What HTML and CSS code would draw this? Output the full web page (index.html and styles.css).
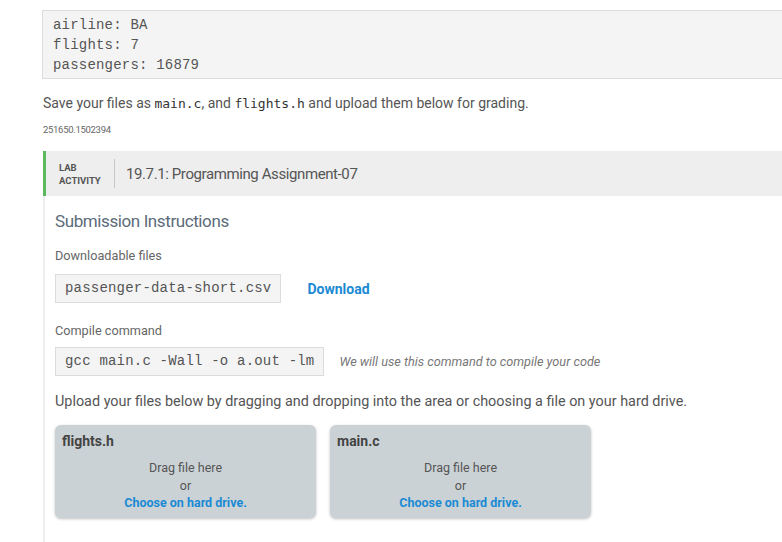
FILE: index.html
```html
<!DOCTYPE html>
<html>
<head>
<meta charset="utf-8">
<link rel="stylesheet" href="styles.css">
</head>
<body>
<div class="page">
  <pre class="code-block">airline: BA
flights: 7
passengers: 16879</pre>
  <p class="save-note">Save your files as <code>main.c</code>, and <code>flights.h</code> and upload them below for grading.</p>
  <div class="item-id">251650.1502394</div>

  <div class="lab">
    <div class="lab-header">
      <div class="lab-label">LAB<br>ACTIVITY</div>
      <div class="lab-sep"></div>
      <div class="lab-title">19.7.1: Programming Assignment-07</div>
    </div>
    <div class="lab-body">
      <h2 class="section-title">Submission Instructions</h2>
      <div class="field-label">Downloadable files</div>
      <div class="row">
        <div class="mono-box">passenger-data-short.csv</div>
        <a class="download">Download</a>
      </div>
      <div class="field-label compile">Compile command</div>
      <div class="row compile-row">
        <div class="mono-box">gcc main.c -Wall -o a.out -lm</div>
        <span class="hint">We will use this command to compile your code</span>
      </div>
      <p class="upload-text">Upload your files below by dragging and dropping into the area or choosing a file on your hard drive.</p>
      <div class="drops">
        <div class="drop">
          <div class="drop-name">flights.h</div>
          <div class="drop-center">
            <div>Drag file here</div>
            <div>or</div>
            <div class="choose">Choose on hard drive.</div>
          </div>
        </div>
        <div class="drop">
          <div class="drop-name">main.c</div>
          <div class="drop-center">
            <div>Drag file here</div>
            <div>or</div>
            <div class="choose">Choose on hard drive.</div>
          </div>
        </div>
      </div>
    </div>
  </div>
</div>
</body>
</html>
```

FILE: styles.css
```css
html, body {
  margin: 0;
  padding: 0;
  background: #fff;
  overflow: hidden;
}
body {
  font-family: Roboto, "Liberation Sans", sans-serif;
  color: #555;
}
.page {
  padding: 10px 0 0 42px;
  width: 760px;
}
.code-block {
  margin: 0;
  background: #f4f4f4;
  border: 1px solid #dcdcdc;
  border-right: none;
  padding: 4px 10px 3px 10px;
  font-family: "Liberation Mono", "Courier New", monospace;
  font-size: 14px;
  letter-spacing: 0.2px;
  line-height: 20px;
  color: #555;
}
.save-note {
  margin: 14px 0 0 1px;
  font-size: 14px;
  line-height: 20px;
  color: #555;
}
.save-note code {
  font-family: "DejaVu Sans Mono", monospace;
  font-size: 13px;
  color: #333;
}
.item-id {
  margin: 10px 0 0 1px;
  font-size: 9.5px;
  line-height: 12px;
  color: #666;
  letter-spacing: -0.3px;
}
.lab {
  margin: 15px 0 0 1px;
}
.lab-header {
  display: flex;
  align-items: center;
  height: 45px;
  background: #eeeeee;
  border-left: 3px solid #5cb85c;
}
.lab-label {
  font-size: 9.5px;
  font-weight: 700;
  line-height: 13px;
  color: #555;
  margin-left: 13px;
  width: 53px;
  padding-top: 1px;
}
.lab-sep {
  width: 1px;
  height: 29px;
  background: #c8c8c8;
  margin: 0 11px 0 2px;
}
.lab-title {
  font-size: 15px;
  letter-spacing: -0.4px;
  color: #555;
  line-height: 20px;
}
.lab-body {
  border-left: 2px solid #eeeeee;
  padding: 13px 0 30px 10px;
}
.section-title {
  margin: 0;
  font-size: 17px;
  letter-spacing: -0.4px;
  font-weight: 400;
  line-height: 24px;
  color: #5b6b79;
}
.field-label {
  margin-top: 14px;
  font-size: 12.7px;
  line-height: 18px;
  color: #666;
}
.field-label.compile {
  margin-top: 19px;
}
.row {
  display: flex;
  align-items: center;
  margin-top: 9px;
}
.row.compile-row {
  margin-top: 7px;
}
.mono-box {
  background: #f4f4f4;
  border: 1px solid #dcdcdc;
  padding: 0 9px;
  height: 27px;
  line-height: 27px;
  font-family: "Liberation Mono", "Courier New", monospace;
  font-size: 14px;
  letter-spacing: 0.2px;
  color: #555;
}
.download {
  margin-left: 26px;
  font-size: 14px;
  font-weight: 700;
  color: #1a8ad4;
}
.hint {
  margin-left: 15px;
  font-size: 12.7px;
  font-style: italic;
  color: #777;
}
.upload-text {
  margin: 16px 0 0 0;
  font-size: 14.4px;
  line-height: 20px;
  color: #555;
}
.drops {
  display: flex;
  gap: 14px;
  margin-top: 13px;
}
.drop {
  width: 261px;
  height: 93px;
  box-sizing: border-box;
  background: #cbd2d6;
  border-radius: 6px;
  box-shadow: 0 1px 3px rgba(0,0,0,0.25);
  padding: 6px 7px;
}
.drop-name {
  font-size: 14px;
  font-weight: 700;
  line-height: 20px;
  color: #444;
}
.drop-center {
  text-align: center;
  font-size: 12.5px;
  line-height: 17.5px;
  color: #555;
  margin-top: 8px;
}
.choose {
  font-weight: 700;
  color: #1a8ad4;
}
```
